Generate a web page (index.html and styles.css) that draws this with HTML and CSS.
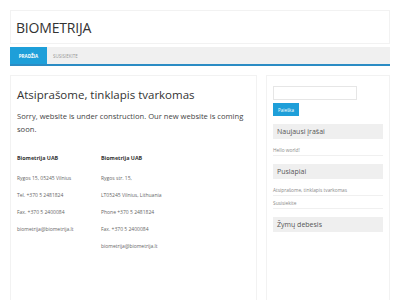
FILE: index.html
```html
<!DOCTYPE html>
<html lang="lt">
<head>
  <meta charset="UTF-8" />
  <meta name="viewport" content="width=device-width, initial-scale=1.0"/>
  <title>Biometrija</title>
  <link rel="stylesheet" href="styles.css">
</head>
<body>
  <div class="wrapper">

    <div class="site-header">
      <div class="site-title">BIOMETRIJA</div>
    </div>

    <div class="navbar">
      <a class="active">PRADŽIA</a>
      <a>SUSISIEKITE</a>
    </div>

    <div class="content-row">
      <div class="main">
        <h1>Atsiprašome, tinklapis tvarkomas</h1>
        <p class="lead">Sorry, website is under construction. Our new website is coming soon.</p>

        <div class="contacts">
          <div class="contact-col">
            <b>Biometrija UAB</b>
            <span>Rygos 15, 05245 Vilnius</span>
            <span>Tel. +370 5 2481824</span>
            <span>Fax. +370 5 2400084</span>
            <span>biometrija@biometrija.lt</span>
          </div>
          <div class="contact-col">
            <b>Biometrija UAB</b>
            <span>Rygos str. 15,</span>
            <span>LT05245 Vilnius, Lithuania</span>
            <span>Phone +370 5 2481824</span>
            <span>Fax. +370 5 2400084</span>
            <span>biometrija@biometrija.lt</span>
          </div>
        </div>
      </div>

      <div class="sidebar">
        <div class="search">
          <input type="text" />
          <button>Paieška</button>
        </div>

        <div class="widget-title">Naujausi įrašai</div>
        <ul class="widget-list">
          <li>Hello world!</li>
        </ul>

        <div class="widget-title">Puslapiai</div>
        <ul class="widget-list">
          <li>Atsiprašome, tinklapis tvarkomas</li>
          <li>Susisiekite</li>
        </ul>

        <div class="widget-title">Žymų debesis</div>
      </div>
    </div>

  </div>
</body>
</html>
```

FILE: styles.css
```css
* {
  box-sizing: border-box;
  margin: 0;
  padding: 0;
  font-family: 'Open Sans', sans-serif;
}
body {
  background: #fff;
  color: #444;
  overflow: hidden;
}
.wrapper {
  width: 380px;
  margin: 10px auto 0;
}
.site-header {
  height: 34px;
  border: 1px solid #f2f2f2;
  padding-left: 5px;
  display: flex;
  align-items: center;
}
.site-title {
  font-size: 14px;
  color: #333;
  letter-spacing: -0.2px;
}
.navbar {
  margin-top: 3px;
  height: 19px;
  background-color: #f0f0f0;
  border-bottom: 2px solid #2b8cc4;
  display: flex;
}
.navbar a {
  font-size: 4.5px;
  color: #999;
  padding: 0 6px;
  display: flex;
  align-items: center;
}
.navbar a.active {
  background-color: #1e9fd9;
  color: #fff;
  font-weight: bold;
  width: 37px;
  justify-content: center;
  padding: 0;
}
.content-row {
  display: flex;
  gap: 9px;
  margin-top: 9px;
}
.main {
  width: 247px;
  height: 240px;
  border: 1px solid #f2f2f2;
  padding: 11px 6px;
}
.main h1 {
  font-size: 11.5px;
  font-weight: normal;
  color: #333;
  line-height: 16px;
}
.lead {
  font-size: 7.6px;
  line-height: 13px;
  margin-top: 7px;
  color: #444;
}
.contacts {
  display: flex;
  margin-top: 18px;
}
.contact-col {
  width: 84px;
  display: flex;
  flex-direction: column;
  gap: 8px;
  font-size: 5px;
  line-height: 9px;
  color: #666;
}
.contact-col b {
  color: #333;
  font-size: 5.4px;
  margin-bottom: 3px;
}
.sidebar {
  flex: 1;
  height: 240px;
  border: 1px solid #f2f2f2;
  padding: 10px 6px;
}
.search input {
  display: block;
  width: 84px;
  height: 14px;
  border: 1px solid #e6e6e6;
}
.search button {
  display: block;
  margin-top: 3px;
  background-color: #1e9fd9;
  border: none;
  color: #fff;
  font-size: 4.5px;
  width: 26px;
  height: 13px;
}
.widget-title {
  margin-top: 8px;
  background-color: #efefef;
  height: 15px;
  font-size: 7px;
  color: #555;
  padding-left: 4px;
  display: flex;
  align-items: center;
}
.widget-list {
  list-style: none;
  margin-top: 7px;
}
.widget-list li {
  font-size: 4.8px;
  color: #888;
  line-height: 8px;
  padding: 3px 0 1px;
  border-bottom: 1px solid #f0f0f0;
}
.widget-list li:first-child {
  padding-top: 0;
}
```
